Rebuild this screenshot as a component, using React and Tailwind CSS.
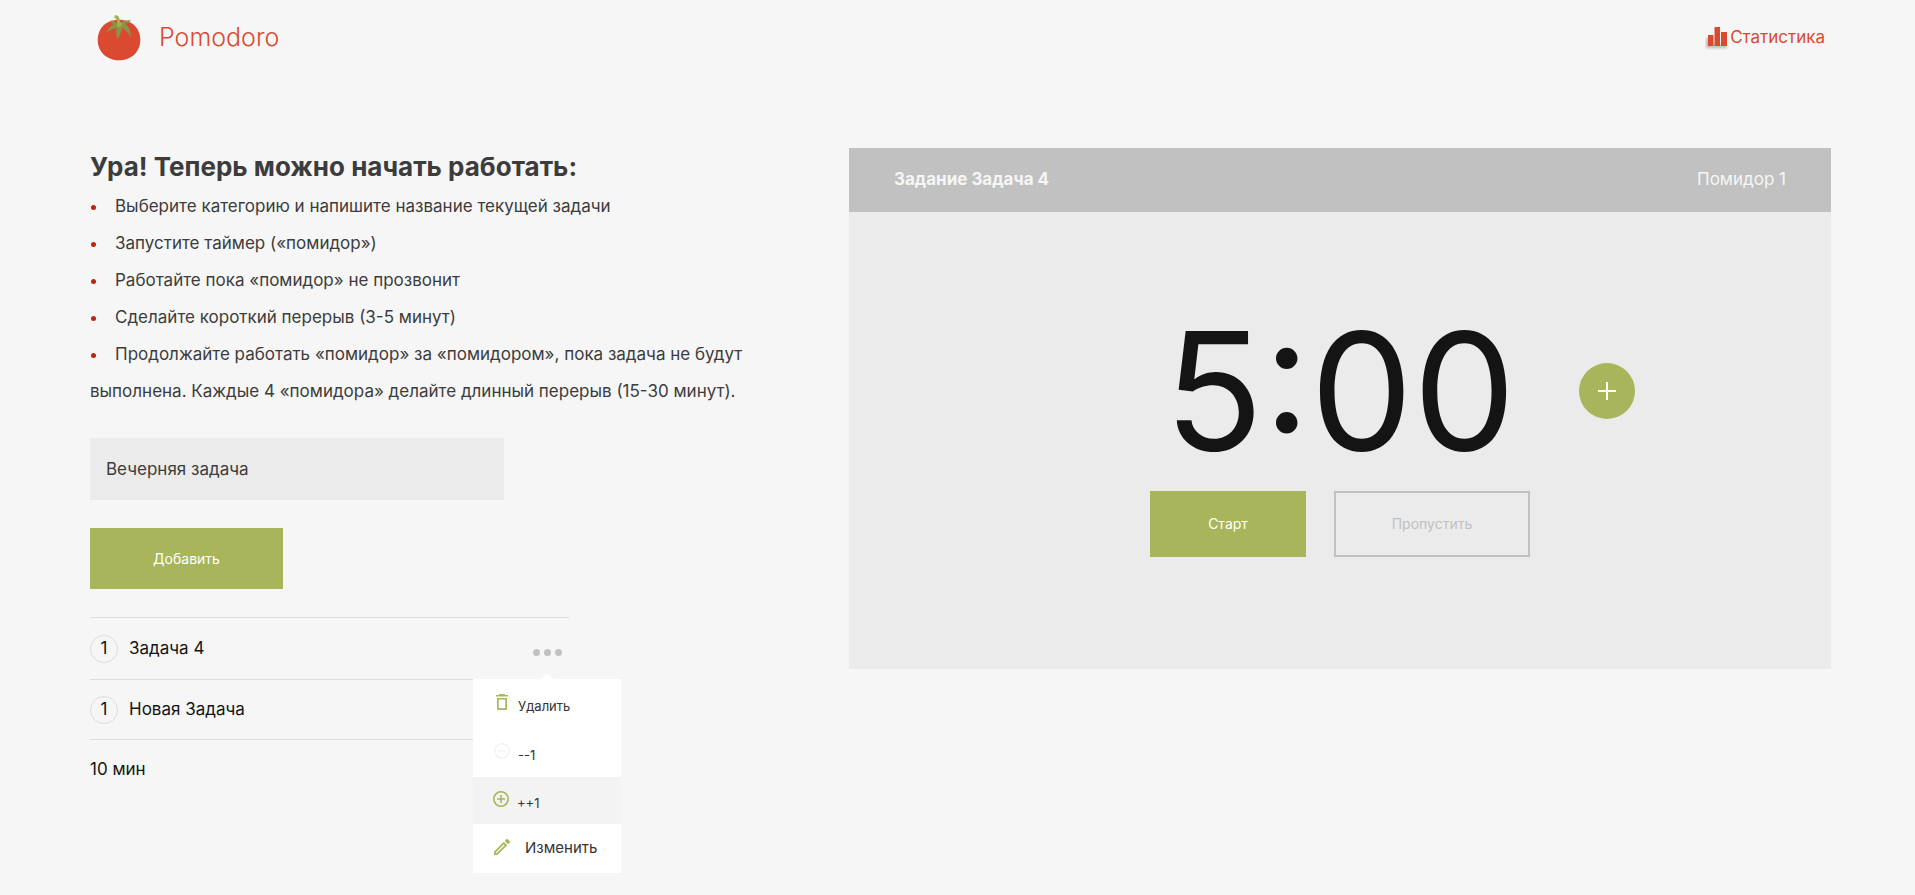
import React, { useState } from "react";

const STEPS = [
  "Выберите категорию и напишите название текущей задачи",
  "Запустите таймер («помидор»)",
  "Работайте пока «помидор» не прозвонит",
  "Сделайте короткий перерыв (3-5 минут)",
  "Продолжайте работать «помидор» за «помидором», пока задача не будут выполнена. Каждые 4 «помидора» делайте длинный перерыв (15-30 минут).",
];

function TomatoLogo() {
  return (
    <svg viewBox="0 0 44 46" className="h-[46px] w-[44px]" aria-hidden="true">
      <path
        d="M22 4.800C34.500 4.800 43.300 13 43.300 25C43.300 37 34 45.300 22 45.300C10 45.300 0.700 37 0.700 25C0.700 13 9.500 4.800 22 4.800Z"
        fill="#d94a30"
      />
      <path
        d="M22.500 9C26 6 30 4.800 34 5.600C32 7.500 30 8.300 28 8.800C32 12 34.500 17 33.500 22.500C31 17.500 28.500 14.500 25.500 13C24.500 17 23 20 20.500 24C19 20 19 16 19.500 13C15.500 14 12 15.500 9.500 18C10.500 14 13.500 11 17 9.200C15 8.500 14 7.500 13 5.500C16 5.600 18.500 6.600 20 8Z"
        fill="#8b9445"
      />
      <path
        d="M17.500 0.600C19.800 -0.200 21.800 1.200 22.300 3.500C22.900 6 23.800 7.500 24.800 9.500C24.500 12 21 12.500 20 10.500C20.800 7 20 3.600 17.500 3Z"
        fill="#a5b354"
      />
    </svg>
  );
}

function StatsIcon() {
  return (
    <svg viewBox="0 0 24 24" className="h-6 w-6" aria-hidden="true">
      <defs>
        <filter id="soft" x="-20%" y="-50%" width="140%" height="200%">
          <feGaussianBlur stdDeviation="1.500" />
        </filter>
      </defs>
      <path d="M1 12H6V18H22V22H1Z" fill="#b8b8b8" filter="url(#soft)" />
      <path d="M3 9H8.500V20H3ZM9.500 1H15V20H9.500ZM16 6H22V20H16Z" fill="#d94a30" />
    </svg>
  );
}

function TrashIcon() {
  return (
    <svg viewBox="0 0 12 16" className="h-4 w-3" fill="#a9b55a" aria-hidden="true">
      <path d="M3.500 0H8.500L9.200 1H12V2.600H0V1H2.800Z" />
      <path d="M1 4H11V14.500Q11 16 9.500 16H2.500Q1 16 1 14.500ZM2.700 5.600V14.300H9.300V5.600Z" fillRule="evenodd" />
    </svg>
  );
}

function CircleIcon({ plus, color }) {
  return (
    <svg viewBox="0 0 16 16" className="h-4 w-4" fill="none" stroke={color} strokeWidth="1.600" aria-hidden="true">
      <circle cx="8" cy="8" r="7.200" />
      <path d={plus ? "M4 8H12M8 4V12" : "M4 8H12"} />
    </svg>
  );
}

function PencilIcon() {
  return (
    <svg viewBox="3 3 18 18" className="h-4 w-4" fill="#a9b55a" aria-hidden="true">
      <path d="M14.060 9.020l.920.920L5.920 19H5v-.920l9.060-9.060M17.660 3c-.250 0-.510.100-.700.290l-1.830 1.830 3.750 3.750 1.830-1.830c.390-.390.390-1.020 0-1.410l-2.340-2.340c-.200-.200-.450-.290-.710-.290zm-3.600 3.190L3 17.250V21h3.750L17.810 9.940l-3.750-3.750z" />
    </svg>
  );
}

function TaskMenu() {
  return (
    <div className="absolute top-full -right-[59px] z-10 mt-[23px] w-[148px] bg-white text-[#333333]">
      <span className="absolute -top-[6px] left-1/2 -translate-x-1/2 border-x-[7px] border-b-[7px] border-x-transparent border-b-white" />
      <button type="button" className="flex h-[49px] w-full items-center gap-[10px] pl-[23px] text-[13px]">
        <span className="pb-1"><TrashIcon /></span>
        <span className="pt-1.5">Удалить</span>
      </button>
      <button type="button" className="flex h-[49px] w-full items-center gap-2 pl-[21px] text-[13px]">
        <span className="pb-1"><CircleIcon color="#f3f3f3" /></span>
        <span className="pt-1.5">--1</span>
      </button>
      <button type="button" className="flex h-[47px] w-full items-center gap-2 bg-[#f3f3f3] pl-5 text-[13px]">
        <span className="pb-1"><CircleIcon plus color="#a9b55a" /></span>
        <span className="pt-1.5">++1</span>
      </button>
      <button type="button" className="flex h-[49px] w-full items-center gap-[15px] pl-[21px] text-[15px]">
        <span className="pb-1"><PencilIcon /></span>
        <span>Изменить</span>
      </button>
    </div>
  );
}

function Task({ title, count, rowClass, menuOpen }) {
  return (
    <li className={`flex items-center border-b border-[#dcdcdc] ${rowClass}`}>
      <span className="mr-[11px] flex size-7 items-center justify-center rounded-full border border-[#dcdcdc]">
        {count}
      </span>
      <span className="grow">{title}</span>
      {menuOpen && (
        <div className="relative mr-[7px] pt-2">
          <button type="button" aria-label="Действия с задачей" className="flex h-[7px] gap-1">
            <span className="size-[7px] rounded-full bg-[#c1c1c1]" />
            <span className="size-[7px] rounded-full bg-[#c1c1c1]" />
            <span className="size-[7px] rounded-full bg-[#c1c1c1]" />
          </button>
          <TaskMenu />
        </div>
      )}
    </li>
  );
}

export default function App() {
  const [name, setName] = useState("Вечерняя задача");

  return (
    <div className="min-h-screen bg-[#f6f6f6] pr-[84px] pl-[90px] font-['Inter',sans-serif] text-[17px] text-[#141414]">
      <header className="flex h-[76px] items-center justify-between pr-[6px] pl-[7px] text-[#d94a30]">
        <a href="#home" className="flex items-center gap-[18px] text-[25px] font-light">
          <TomatoLogo />
          <span>Pomodoro</span>
        </a>
        <a href="#stats" className="flex items-center gap-px">
          <StatsIcon />
          <span>Статистика</span>
        </a>
      </header>

      <main className="grid grid-cols-[671fr_982fr] items-start gap-[88px] pt-[72px]">
        <section>
          <h1 className="mb-[3px] text-[26px] leading-[37px] font-bold text-[#3c3c3c]">
            Ура! Теперь можно начать работать:
          </h1>
          <ul className="leading-[37px] text-[#3c3c3c]">
            {STEPS.map((s) => (
              <li key={s}>
                <span className="ml-px mr-[19px] inline-block size-[5px] rounded-full bg-[#b7280f] align-middle" />
                {s}
              </li>
            ))}
          </ul>

          <form className="mt-7 flex flex-col items-start gap-7" onSubmit={(e) => e.preventDefault()}>
            <input
              type="text"
              aria-label="Название задачи"
              value={name}
              onChange={(e) => setName(e.target.value)}
              className="h-[62px] w-[414px] bg-[#ebebeb] px-4 text-[#3c3c3c] outline-none"
            />
            <button type="submit" className="h-[61px] w-[193px] bg-[#a9b55a] text-sm text-white">
              Добавить
            </button>
          </form>

          <ul className="mt-7 w-[479px] border-t border-[#dcdcdc]">
            <Task title="Задача 4" count={1} rowClass="h-[62px]" menuOpen />
            <Task title="Новая Задача" count={1} rowClass="h-[60px]" />
          </ul>
          <p className="mt-[17px] leading-6">10 мин</p>
        </section>

        <section className="bg-[#ebebeb]">
          <div className="flex h-16 items-center justify-between bg-[#c1c1c1] px-[45px] text-[#f6f6f6]">
            <h2 className="font-bold">Задание Задача 4</h2>
            <span>Помидор 1</span>
          </div>
          <div className="flex flex-col items-center pt-[79px] pb-28">
            <div className="grid w-full grid-cols-[1fr_auto_1fr] items-center">
              <time className="col-start-2 text-[163px] leading-[200px]">5:00</time>
              <button
                type="button"
                aria-label="Добавить минуту"
                className="ml-[63px] flex size-14 items-center justify-center rounded-full bg-[#a9b55a]"
              >
                <svg viewBox="0 0 18 18" className="size-[18px]" stroke="#fff" strokeWidth="2" aria-hidden="true">
                  <path d="M9 0V18M0 9H18" />
                </svg>
              </button>
            </div>
            <div className="flex gap-7 text-sm">
              <button type="button" className="h-[66px] w-[156px] bg-[#a9b55a] text-white">
                Старт
              </button>
              <button type="button" className="h-[66px] w-[196px] border-2 border-[#c1c1c1] text-[#c1c1c1]">
                Пропустить
              </button>
            </div>
          </div>
        </section>
      </main>
    </div>
  );
}
